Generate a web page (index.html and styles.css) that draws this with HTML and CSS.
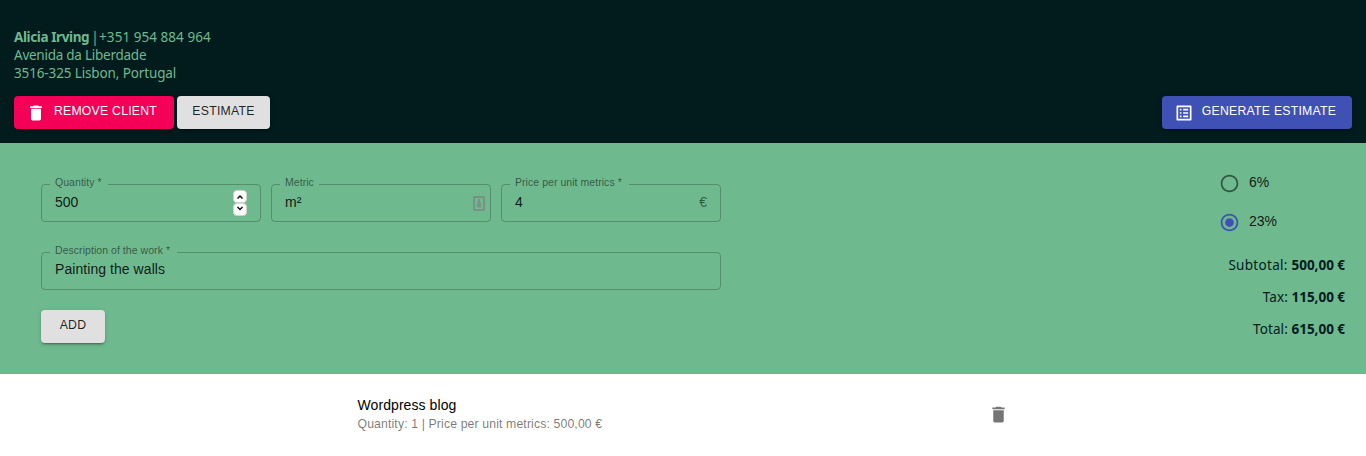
FILE: index.html
```html
<!DOCTYPE html>
<html lang="en">
<head>
<meta charset="utf-8">
<title>Estimate</title>
<link rel="stylesheet" href="styles.css">
</head>
<body>
<header class="header">
  <address class="client">
    <div><b class="client-name">Alicia Irving</b><span class="client-divider"> | </span><span class="client-phone">+351 954 884 964</span></div>
    <div><span class="client-street">Avenida da Liberdade</span></div>
    <div><span class="client-city">3516-325 Lisbon, Portugal</span></div>
  </address>
  <div class="actions">
    <button class="btn btn-remove"><svg class="btn-icon" viewBox="0 0 24 24"><path d="M6 19c0 1.1.9 2 2 2h8c1.1 0 2-.9 2-2V7H6v12zM19 4h-3.5l-1-1h-5l-1 1H5v2h14V4z"/></svg><span>REMOVE CLIENT</span></button>
    <button class="btn btn-estimate"><span>ESTIMATE</span></button>
    <button class="btn btn-generate"><svg class="btn-icon" viewBox="0 0 24 24"><path d="M19 5v14H5V5h14m1.100-2H3.900c-.5 0-.9.400-.9.900v16.200c0 .4.400.9.900.9h16.200c.4 0 .9-.5.900-.9V3.900c0-.5-.5-.9-.9-.9zM11 7h6v2h-6V7zm0 4h6v2h-6v-2zm0 4h6v2h-6zM7 7h2v2H7zm0 4h2v2H7zm0 4h2v2H7z"/></svg><span>GENERATE ESTIMATE</span></button>
  </div>
</header>
<main class="editor">
  <form class="form">
    <div class="row">
      <fieldset class="field">
        <legend class="label label-quantity">Quantity *</legend>
        <span class="value">500</span>
        <span class="spinner">
          <svg class="spin" viewBox="0 0 14 13"><rect x=".5" y=".5" width="13" height="12" rx="3.500"/><path d="M4.500 8.500 7 6l2.500 2.500"/></svg>
          <svg class="spin" viewBox="0 0 14 13"><rect x=".5" y=".5" width="13" height="12" rx="3.500"/><path d="M4.500 4 7 6.500 9.500 4"/></svg>
        </span>
      </fieldset>
      <fieldset class="field field-metric">
        <legend class="label label-metric">Metric</legend>
        <span class="value">m²</span>
        <svg class="autofill" viewBox="0 0 12 15"><rect x="1" y="1" width="10" height="13" rx=".5"/><path d="M6 3v4M4.500 6.500h3M4 8.500h4M4 10.500h4"/></svg>
      </fieldset>
      <fieldset class="field">
        <legend class="label label-price">Price per unit metrics *</legend>
        <span class="value">4</span>
        <span class="currency">€</span>
      </fieldset>
    </div>
    <fieldset class="field field-description">
      <legend class="label label-description">Description of the work *</legend>
      <span class="value value-description">Painting the walls</span>
    </fieldset>
    <button type="button" class="btn btn-add"><span>ADD</span></button>
  </form>
  <section class="summary">
    <div class="radio"><svg viewBox="0 0 24 24"><path d="M12 2C6.480 2 2 6.480 2 12s4.480 10 10 10 10-4.480 10-10S17.520 2 12 2zm0 18c-4.420 0-8-3.580-8-8s3.580-8 8-8 8 3.580 8 8-3.580 8-8 8z"/></svg><span>6%</span></div>
    <div class="radio radio-on"><svg viewBox="0 0 24 24"><path d="M12 2C6.480 2 2 6.480 2 12s4.480 10 10 10 10-4.480 10-10S17.520 2 12 2zm0 18c-4.420 0-8-3.580-8-8s3.580-8 8-8 8 3.580 8 8-3.580 8-8 8z"/><circle cx="12" cy="12" r="5"/></svg><span>23%</span></div>
    <div class="totals">
      <div>Subtotal: <b>500,00 €</b></div>
      <div>Tax: <b>115,00 €</b></div>
      <div>Total: <b>615,00 €</b></div>
    </div>
  </section>
</main>
<section class="item">
  <div class="item-text">
    <div><span class="item-title">Wordpress blog</span></div>
    <div><span class="item-detail">Quantity: 1 | Price per unit metrics: 500,00 €</span></div>
  </div>
  <svg class="item-delete" viewBox="0 0 24 24"><path d="M6 19c0 1.100.9 2 2 2h8c1.100 0 2-.9 2-2V7H6v12zM19 4h-3.500l-1-1h-5l-1 1H5v2h14V4z"/></svg>
</section>
</body>
</html>
```
FILE: styles.css
```css
* { box-sizing: border-box; }
body {
  margin: 0;
  background: #fff;
  font-family: "Liberation Sans", Arial, sans-serif;
  font-size: 14px;
}
.header {
  height: 143px;
  padding: 28px 14px 0;
  background: #021c1e;
  color: #6fb98f;
}
.client {
  height: 68px;
  font: normal 13.500px/18px "Noto Sans", sans-serif;
  letter-spacing: -0.25px;
}
.client-name { letter-spacing: -0.4px; }
.client-divider { letter-spacing: -1.5px; }
.client-phone { letter-spacing: 0.04px; }
.client-city { letter-spacing: -0.13px; }
.actions { display: flex; gap: 3px; }
.btn {
  display: flex;
  align-items: center;
  justify-content: center;
  height: 33px;
  padding: 0;
  border: 0;
  border-radius: 4px;
  font: 12.250px/30px "Liberation Sans", Arial, sans-serif;
  letter-spacing: 0.24px;
  background: #e0e0e0;
  color: rgba(0, 0, 0, .87);
  box-shadow: 0 3px 1px -2px rgba(0, 0, 0, .2), 0 2px 2px rgba(0, 0, 0, .14), 0 1px 5px rgba(0, 0, 0, .12);
}
.btn span { height: 33px; }
.btn-icon { width: 20px; height: 20px; margin: 0 8px 0 0; fill: currentColor; }
.btn-remove { width: 160px; padding-right: 5px; background: #f50057; color: #fff; }
.btn-estimate { width: 93px; }
.btn-generate { width: 190px; margin-left: auto; padding-right: 4px; background: #3f51b5; color: #fff; }
.editor {
  display: flex;
  justify-content: space-between;
  height: 231px;
  background: #6fb98f;
}
.form { width: 680px; margin-left: 41px; padding-top: 34px; }
.row { display: flex; gap: 10px; }
.field {
  display: flex;
  align-items: center;
  justify-content: space-between;
  width: 220px;
  height: 45px;
  min-width: 0;
  margin: 0;
  padding: 0 13px 8px;
  border: 1px solid rgba(0, 0, 0, .23);
  border-radius: 4px;
}
.label {
  height: 14px;
  margin-left: -5px;
  padding: 0 0 0 5px;
  font-size: 10.500px;
  line-height: 11px;
  white-space: nowrap;
  letter-spacing: .05px;
  color: rgba(0, 0, 0, .54);
}
.label-quantity { width: 58px; }
.label-metric { width: 39px; }
.label-price { width: 119px; }
.label-description { width: 127px; }
.value { line-height: 18px; color: rgba(0, 0, 0, .87); }
.value-description { letter-spacing: .06px; }
.currency { color: rgba(0, 0, 0, .54); }
.spinner { display: flex; flex-direction: column; width: 14px; height: 26px; margin-bottom: -2px; }
.spin { width: 14px; height: 13px; }
.spin rect { fill: #fff; stroke: #d6d0cc; }
.spin path { fill: none; stroke: #111; stroke-width: 1.500; }
.field-metric { padding-right: 5px; }
.autofill { width: 12px; height: 15px; margin-bottom: -2px; fill: none; stroke: #7f8581; stroke-width: 1.500; }
.field-description { width: 680px; margin-top: 23px; padding-bottom: 10px; }
.btn-add { width: 64px; margin-top: 20px; }
.summary {
  width: 200px;
  padding: 29px 21px 0 0;
  color: #021c1e;
}
.radio { display: flex; align-items: center; height: 22px; margin: 0 0 17px 53px; color: rgba(0, 0, 0, .87); }
.radio svg { width: 21px; height: 21px; margin-right: 9px; fill: rgba(0, 0, 0, .54); }
.radio span { height: 18px; line-height: 17px; }
.radio-on svg { fill: #3f51b5; }
.totals {
  margin-top: -1px;
  font: 13.500px/32px "Noto Sans", sans-serif;
  text-align: right;
  letter-spacing: 0.3px;
}
.totals b { letter-spacing: -0.03px; }
.totals div + div { letter-spacing: 0.1px; }
.item { display: flex; width: 651px; margin: 21px auto 0; justify-content: space-between; }
.item-title { line-height: 20px; color: #000; letter-spacing: .08px; }
.item-detail { font-size: 12.250px; line-height: 18px; color: rgba(0, 0, 0, .54); letter-spacing: .13px; }
.item-delete { width: 21px; height: 21px; margin: 9px 0 0; fill: #757575; }
```
